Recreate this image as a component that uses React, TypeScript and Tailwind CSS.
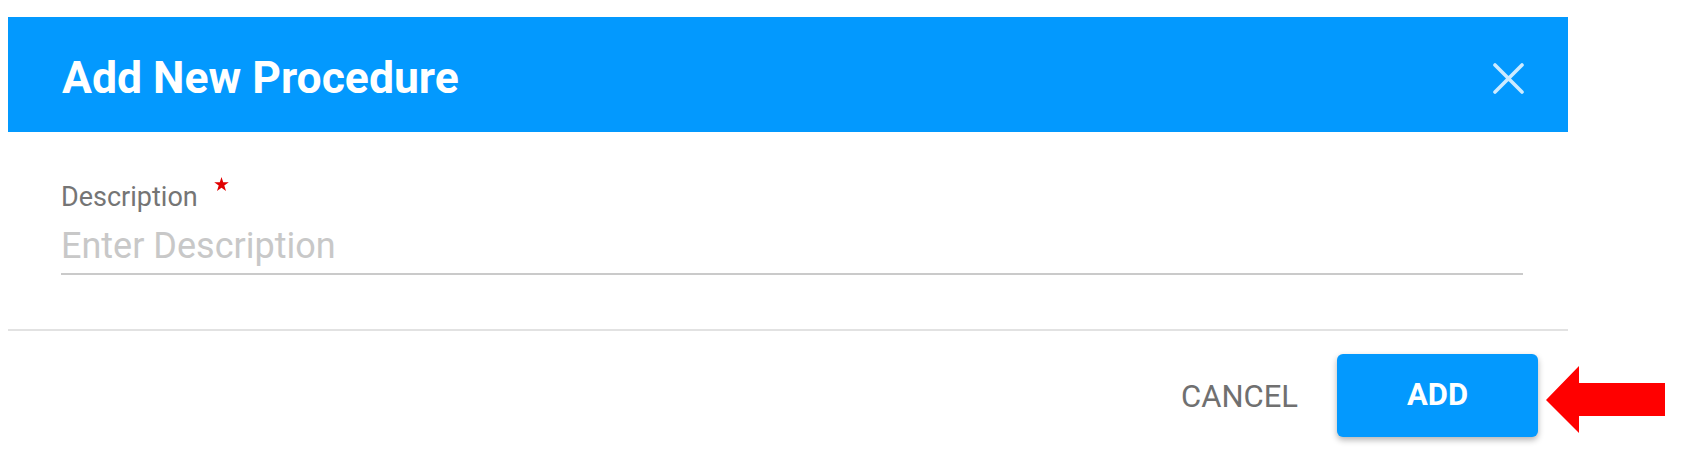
import React, { useState } from "react";

const CloseIcon = () => (
  <svg width="31" height="31" viewBox="0 0 31 31" fill="none">
    <path
      d="M2 2L29 29M29 2L2 29"
      stroke="currentColor"
      strokeWidth="3.6"
      strokeLinecap="round"
    />
  </svg>
);

const RequiredStar = () => (
  <svg width="15" height="14" viewBox="0 0 24 23" className="shrink-0">
    <polygon
      fill="#e00000"
      points="12,0 14.8,8.6 24,8.6 16.6,14 19.4,23 12,17.5 4.6,23 7.4,14 0,8.6 9.2,8.6"
    />
  </svg>
);

const PointerArrow = () => (
  <svg width="119" height="67" viewBox="0 0 119 67">
    <polygon fill="#ff0000" points="0,34 33,0 33,17 119,17 119,50 33,50 33,67" />
  </svg>
);

const App = () => {
  const [description, setDescription] = useState<string>("");

  return (
    <div className="relative w-[1701px] h-[469px] bg-white overflow-hidden [font-family:Roboto,'Liberation_Sans',sans-serif]">
      <div className="ml-[8px] mt-[17px] w-[1560px]">
        {/* header */}
        <div className="h-[115px] bg-[#0399fe] flex items-center justify-between pl-[54px] pr-[44px] pt-[7px]">
          <h2 className="text-[44.5px] leading-[44px] font-bold text-white">
            Add New Procedure
          </h2>
          <button className="text-white/80">
            <CloseIcon />
          </button>
        </div>

        {/* form */}
        <div className="pl-[53px] pr-[45px] pt-[50px] pb-[54px]">
          <div className="flex items-start">
            <label className="text-[27px] leading-[30px] text-[#757575]">
              Description
            </label>
            <span className="ml-[16px] -mt-[5px]">
              <RequiredStar />
            </span>
          </div>
          <input
            value={description}
            onChange={(e) => setDescription(e.target.value)}
            placeholder="Enter Description"
            className="mt-[13px] block w-full h-[50px] pb-[6px] border-b-2 border-[#cacaca] text-[36px] text-[#333] placeholder:text-[#c8c8c8] outline-none bg-transparent"
          />
        </div>

        {/* actions */}
        <div className="border-t-2 border-[#e2e2e2] flex justify-end items-center pt-[23px] pr-[30px]">
          <button className="text-[31px] leading-[36px] text-[#707070] mr-[39px] mt-[2px]">
            CANCEL
          </button>
          <button className="w-[201px] h-[83px] rounded-[6px] bg-[#0399fe] text-white text-[31px] font-bold shadow-[0_3px_6px_rgba(0,0,0,0.3)]">
            ADD
          </button>
        </div>
      </div>

      <div className="absolute left-[1546px] top-[366px]">
        <PointerArrow />
      </div>
    </div>
  );
};

export default App;
